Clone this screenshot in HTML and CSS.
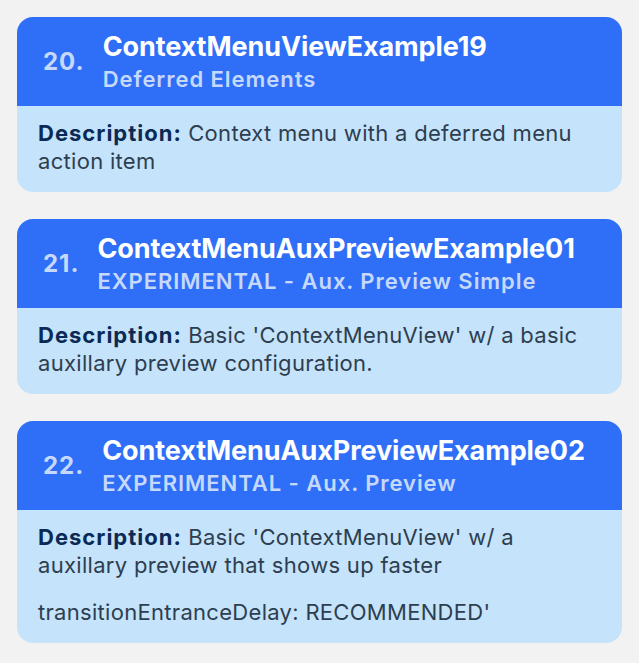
FILE: index.html
```html
<!DOCTYPE html>
<html lang="en">
<head>
<meta charset="utf-8">
<title>Context Menu Examples</title>
<link rel="stylesheet" href="styles.css">
</head>
<body>
<main class="list">
  <section class="card">
    <header class="card-header">
      <div class="num">20.</div>
      <div class="titles">
        <div class="title">ContextMenuViewExample19</div>
        <div class="subtitle">Deferred Elements</div>
      </div>
    </header>
    <div class="card-body">
      <p class="desc"><span class="label">Description:</span> Context menu with a deferred menu action item</p>
    </div>
  </section>
  <section class="card">
    <header class="card-header">
      <div class="num">21.</div>
      <div class="titles">
        <div class="title">ContextMenuAuxPreviewExample01</div>
        <div class="subtitle">EXPERIMENTAL - Aux. Preview Simple</div>
      </div>
    </header>
    <div class="card-body">
      <p class="desc"><span class="label">Description:</span> Basic 'ContextMenuView' w/ a basic auxillary preview configuration.</p>
    </div>
  </section>
  <section class="card">
    <header class="card-header">
      <div class="num">22.</div>
      <div class="titles">
        <div class="title">ContextMenuAuxPreviewExample02</div>
        <div class="subtitle">EXPERIMENTAL - Aux. Preview</div>
      </div>
    </header>
    <div class="card-body">
      <p class="desc"><span class="label">Description:</span> Basic 'ContextMenuView' w/ a auxillary preview that shows up faster</p>
      <p class="desc extra">transitionEntranceDelay: RECOMMENDED'</p>
    </div>
  </section>
</main>
</body>
</html>
```
FILE: styles.css
```css
html, body {
  margin: 0;
  padding: 0;
  background: #f2f2f2;
}
body {
  font-family: Inter, "Noto Sans", "Liberation Sans", sans-serif;
  width: 639px;
  height: 663px;
  overflow: hidden;
}
.list {
  display: flex;
  flex-direction: column;
  gap: 27px;
  padding: 17px 17px 0 17px;
}
.card {
  border-radius: 16px;
  overflow: hidden;
  background: #c5e3fa;
}
.card-header {
  background: #2f6ff7;
  display: flex;
  align-items: center;
  gap: 18px;
  padding: 0 16px 0 26px;
  height: 89px;
  box-sizing: border-box;
}
.num {
  color: #c6d9fb;
  font-weight: 700;
  font-size: 24px;
  line-height: 28px;
  letter-spacing: 1px;
}
.titles {
  display: flex;
  flex-direction: column;
}
.title {
  color: #ffffff;
  font-weight: 700;
  font-size: 27px;
  line-height: 30px;
  letter-spacing: -0.1px;
  white-space: nowrap;
}
.subtitle {
  color: #c6d9fb;
  font-weight: 600;
  font-size: 22px;
  line-height: 26px;
  letter-spacing: 0.95px;
  margin-top: 4px;
  white-space: nowrap;
}
.card-body {
  padding: 13px 21px 17px 21px;
}
.desc {
  margin: 0;
  font-size: 22px;
  line-height: 28px;
  letter-spacing: 0.3px;
  color: #2d3e50;
}
.desc.extra {
  margin-top: 19px;
}
.label {
  font-weight: 700;
  letter-spacing: 1px;
  color: #0a2a55;
}
```
